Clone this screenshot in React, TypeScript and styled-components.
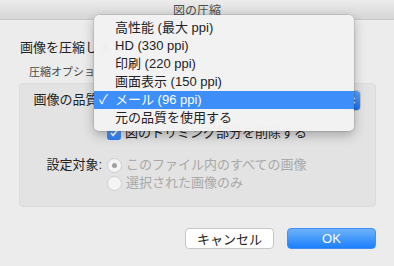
import React from "react";
import styled, { createGlobalStyle } from "styled-components";

const GlobalStyle = createGlobalStyle`
  body {
    margin: 0;
    background: #ececec;
    font-family: "Liberation Sans", "Noto Sans CJK JP", sans-serif;
  }
`;

const Window = styled.div`
  position: relative;
  width: 394px;
  height: 266px;
  overflow: hidden;
  background: #ececec;
  color: #222;
  font-size: 13px;
`;

const TitleBar = styled.div`
  height: 19px;
  display: flex;
  align-items: center;
  justify-content: center;
  background: linear-gradient(#ececec, #d6d6d6);
  border-bottom: 1px solid #c8c8c8;
  color: #4d4d4d;
  font-size: 12px;
`;

const Body = styled.div`
  padding: 20px 18px 0 19px;
`;

const Heading = styled.div`
  line-height: 16px;
  padding-left: 1px;
`;

const GroupLabel = styled.div`
  margin-top: 9px;
  padding-left: 10px;
  font-size: 11px;
  line-height: 14px;
  color: #4a4a4a;
`;

const GroupBox = styled.div`
  margin-top: 4px;
  height: 124px;
  box-sizing: border-box;
  padding-top: 6px;
  background: #e3e3e3;
  border: 1px solid #dbdbdb;
  border-radius: 4px;
  display: grid;
  grid-template-columns: 82px 1fr;
  column-gap: 5px;
  align-content: start;
`;

const FieldLabel = styled.div<{ $top?: number }>`
  text-align: right;
  line-height: 19px;
  margin-top: ${(p) => p.$top ?? 0}px;
`;

const Cell = styled.div<{ $top?: number }>`
  margin-top: ${(p) => p.$top ?? 0}px;
  padding-right: 14px;
`;

const Popup = styled.div`
  height: 19px;
  border-radius: 4px;
  background: #fff;
  border: 1px solid #c4c4c4;
  position: relative;
  overflow: hidden;
`;

const PopupArrows = styled.div`
  position: absolute;
  right: 0;
  top: 0;
  bottom: 0;
  width: 16px;
  background: linear-gradient(#5fa5f9, #1a6ff0);
  display: flex;
  align-items: center;
  justify-content: center;
`;

const CheckRow = styled.div<{ $disabled?: boolean }>`
  display: flex;
  align-items: center;
  gap: 4px;
  height: 16px;
  line-height: 16px;
  color: ${(p) => (p.$disabled ? "#a9a9a9" : "#222")};
`;

const CheckBox = styled.span`
  width: 14px;
  height: 14px;
  box-sizing: border-box;
  border-radius: 3px;
  background: linear-gradient(#67aefa, #2a7ff5);
  display: flex;
  align-items: center;
  justify-content: center;
`;

const Radio = styled.span<{ $on?: boolean }>`
  width: 15px;
  height: 15px;
  box-sizing: border-box;
  border-radius: 50%;
  border: 1px solid #cfcfcf;
  background: #f4f4f4;
  display: flex;
  align-items: center;
  justify-content: center;
  &::after {
    content: "";
    width: 5px;
    height: 5px;
    border-radius: 50%;
    background: ${(p) => (p.$on ? "#a0a0a0" : "transparent")};
  }
`;

const RadioList = styled.div`
  display: flex;
  flex-direction: column;
  gap: 2px;
`;

const ButtonBar = styled.div`
  display: flex;
  justify-content: flex-end;
  gap: 13px;
  margin-top: 21px;
  padding-right: 0;
`;

const Button = styled.button<{ $primary?: boolean }>`
  width: 89px;
  height: 21px;
  box-sizing: border-box;
  border-radius: 4px;
  font-family: inherit;
  font-size: 13px;
  padding: 0;
  border: 1px solid ${(p) => (p.$primary ? "#3f8ef9" : "#c6c6c6")};
  background: ${(p) =>
    p.$primary ? "linear-gradient(#6db2fb, #1b7ffb)" : "#fff"};
  color: ${(p) => (p.$primary ? "#fff" : "#222")};
`;

const Menu = styled.div`
  position: absolute;
  left: 94px;
  top: 15px;
  width: 260px;
  padding: 4px 0;
  background: rgba(242, 242, 242, 0.98);
  border-radius: 5px;
  box-shadow: 0 0 0 0.5px rgba(0, 0, 0, 0.18), 0 4px 12px rgba(0, 0, 0, 0.28);
`;

const MenuItem = styled.div<{ $selected?: boolean }>`
  position: relative;
  height: 18px;
  line-height: 18px;
  padding-left: 21px;
  font-size: 13px;
  background: ${(p) => (p.$selected ? "#3d8ef8" : "transparent")};
  color: ${(p) => (p.$selected ? "#fff" : "#222")};
`;

const Check = styled.span`
  position: absolute;
  left: 5px;
  top: 0;
`;

const qualities = [
  "高性能 (最大 ppi)",
  "HD (330 ppi)",
  "印刷 (220 ppi)",
  "画面表示 (150 ppi)",
  "メール (96 ppi)",
  "元の品質を使用する",
];

export default function App() {
  return (
    <>
      <GlobalStyle />
      <Window>
        <TitleBar>図の圧縮</TitleBar>
        <Body>
          <Heading>画像を圧縮します</Heading>
          <GroupLabel>圧縮オプション</GroupLabel>
          <GroupBox>
            <FieldLabel>画像の品質:</FieldLabel>
            <Cell>
              <Popup>
                <PopupArrows>
                  <svg width="7" height="11" viewBox="0 0 7 11">
                    <path d="M1 4 L3.5 1.5 L6 4 M1 7 L3.5 9.5 L6 7" stroke="#fff" strokeWidth="1.3" fill="none" />
                  </svg>
                </PopupArrows>
              </Popup>
            </Cell>
            <div />
            <Cell $top={14}>
              <CheckRow>
                <CheckBox>
                  <svg width="10" height="10" viewBox="0 0 10 10">
                    <path d="M2 5.2 L4.2 7.4 L8.2 2.4" stroke="#fff" strokeWidth="1.8" fill="none" />
                  </svg>
                </CheckBox>
                図のトリミング部分を削除する
              </CheckRow>
            </Cell>
            <FieldLabel $top={14}>設定対象:</FieldLabel>
            <Cell $top={16}>
              <RadioList>
                <CheckRow $disabled>
                  <Radio $on />
                  このファイル内のすべての画像
                </CheckRow>
                <CheckRow $disabled>
                  <Radio />
                  選択された画像のみ
                </CheckRow>
              </RadioList>
            </Cell>
          </GroupBox>
          <ButtonBar>
            <Button>キャンセル</Button>
            <Button $primary>OK</Button>
          </ButtonBar>
        </Body>
        <Menu>
          {qualities.map((q, i) => (
            <MenuItem key={q} $selected={i === 4}>
              {i === 4 && <Check>✓</Check>}
              {q}
            </MenuItem>
          ))}
        </Menu>
      </Window>
    </>
  );
}
